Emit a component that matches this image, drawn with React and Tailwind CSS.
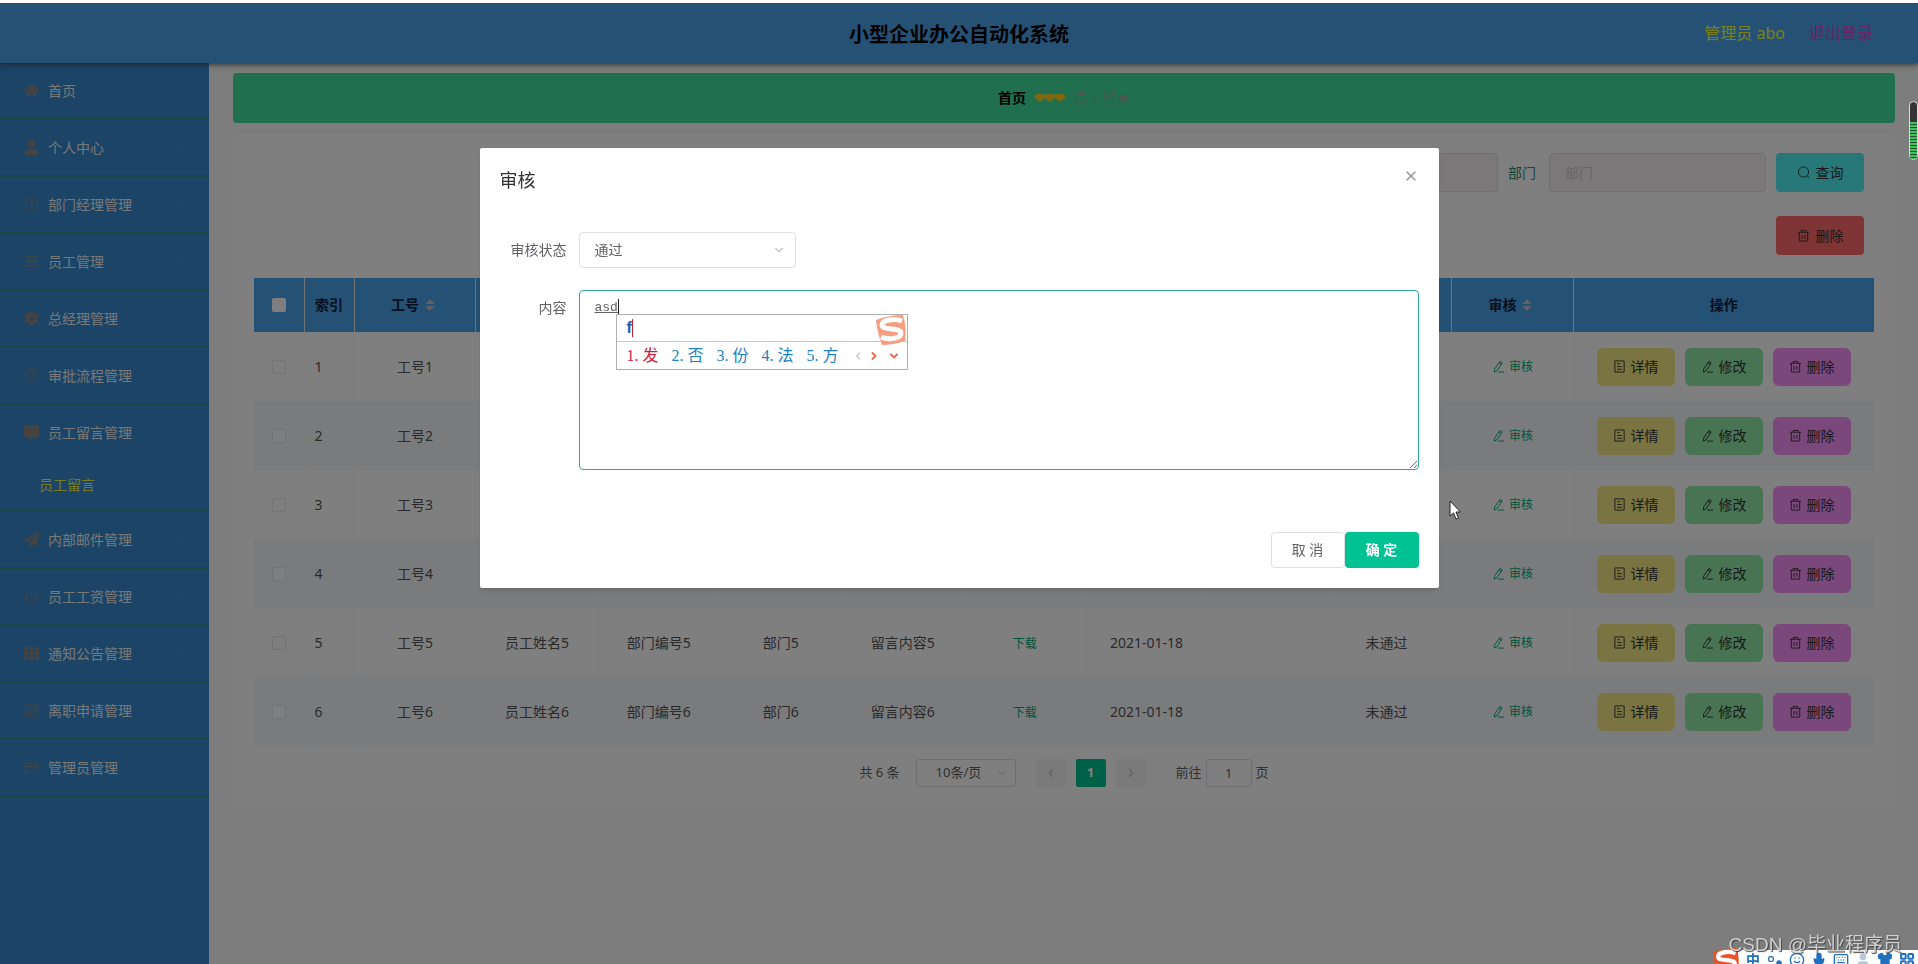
import {
  Clock, Menu, CircleHelp, Power, SquarePen, CreditCard,
  ChevronDown, ChevronLeft, ChevronRight, Circle, X, Mic, Keyboard, Smile, Shirt, LayoutGrid, User,
} from 'lucide-react';
import { FaHome, FaUser, FaCog, FaCommentAlt, FaPaperPlane, FaTh } from 'react-icons/fa';

const menus = [
  { label: '首页', icon: <FaHome size={15} /> },
  { label: '个人中心', icon: <FaUser size={15} />, arrow: true },
  { label: '部门经理管理', icon: <Clock size={15} />, arrow: true },
  { label: '员工管理', icon: <Menu size={15} strokeWidth={3} />, arrow: true },
  { label: '总经理管理', icon: <FaCog size={15} />, arrow: true },
  { label: '审批流程管理', icon: <CircleHelp size={15} />, arrow: true },
  { label: '员工留言管理', icon: <FaCommentAlt size={15} />, arrow: true, child: '员工留言' },
  { label: '内部邮件管理', icon: <FaPaperPlane size={15} />, arrow: true },
  { label: '员工工资管理', icon: <Power size={15} />, arrow: true },
  { label: '通知公告管理', icon: <FaTh size={15} />, arrow: true },
  { label: '离职申请管理', icon: <SquarePen size={15} />, arrow: true },
  { label: '管理员管理', icon: <CreditCard size={15} />, arrow: true },
];

const columns = ['工号', '员工姓名', '部门编号', '部门', '留言内容', '附件', '留言时间', '审核回复', '审核状态', '审核'];
const rows = [1, 2, 3, 4, 5, 6];

const EditIcon = () => (
  <svg width="13" height="13" viewBox="0 0 14 14" fill="none" stroke="currentColor" aria-hidden="true">
    <path d="M8.5 1.5 11 3 5.5 11.5 2.5 13 2.8 9.8ZM7.5 3.2 10 4.8M6.5 13H13" />
  </svg>
);

const TrashIcon = () => (
  <svg width="13" height="13" viewBox="0 0 14 14" fill="none" stroke="currentColor" aria-hidden="true">
    <path d="M1 3.5H13M4.5 3.5V1.5H9.5V3.5M2.5 3.5V13H11.5V3.5M5.5 6.5V10.5M8.5 6.5V10.5" />
  </svg>
);

const DocIcon = () => (
  <svg width="13" height="13" viewBox="0 0 14 14" fill="none" stroke="currentColor" aria-hidden="true">
    <path d="M2 1H12V13H2ZM4.5 4H7.5M4.5 7H9.5M4.5 10H9.5" />
  </svg>
);

const SearchIcon = () => (
  <svg width="13" height="13" viewBox="0 0 14 14" fill="none" stroke="currentColor" aria-hidden="true">
    <circle cx="7" cy="6.5" r="5.5" />
    <path d="M11 10.5 13 13" />
  </svg>
);

const SogouLogo = ({ className }) => (
  <svg viewBox="0 0 32 32" className={className} aria-hidden="true">
    <path d="M1 6Q14 1 28 1 32 14 30 27 18 31 7 31 2 18 1 6Z" fill="currentColor" />
    <path d="M27 7C19 4 7 6 7 11 7 17 26 13 26 19 26 25 13 26 6 23" fill="none" stroke="#fff" strokeWidth="5" />
  </svg>
);

const Sort = () => (
  <svg width="10" height="14" viewBox="0 0 10 14" fill="#c0c4cc" className="ml-[6px]" aria-hidden="true">
    <path d="M5 1 9.5 6H.5ZM5 13 .5 8H9.5Z" />
  </svg>
);

function Sidebar() {
  return (
    <aside className="w-[209px] shrink-0 bg-[#3688cc]">
      <nav>
        {menus.map((m) => (
          <div key={m.label} className="border-b-2 border-[#36888a]">
            <a href="#" className="flex h-[55px] items-center gap-[9px] pr-5 pl-6 text-sm text-[#f0f0f0]">
              <span className="text-[#8c8680]">{m.icon}</span>
              <span className="grow">{m.label}</span>
              {m.arrow && <ChevronDown size={12} className="text-[#4a90c8]" />}
            </a>
            {m.child && (
              <a href="#" className="flex h-[50px] items-center pl-[39px] text-sm text-[#e8f850]">{m.child}</a>
            )}
          </div>
        ))}
      </nav>
    </aside>
  );
}

function SearchBar() {
  return (
    <form className="flex flex-col items-end gap-6 pr-[10px]">
      <div className="flex items-center gap-[10px] text-sm text-[#2e8b70]">
        <label htmlFor="name" className="pr-[3px]">员工姓名</label>
        <input id="name" placeholder="员工姓名" className="h-[39px] w-[217px] rounded border border-[#e4dce0] bg-[#f7f0f2] px-[15px] placeholder:text-[#d4ccd0]" />
        <label htmlFor="dept" className="pr-[3px]">部门</label>
        <input id="dept" placeholder="部门" className="h-[39px] w-[217px] rounded border border-[#e4dce0] bg-[#f7f0f2] px-[15px] placeholder:text-[#d4ccd0]" />
        <button type="button" className="flex h-[39px] w-[88px] items-center justify-center gap-[6px] rounded-sm bg-[#52f0f2] text-[#333]">
          <SearchIcon />查询
        </button>
      </div>
      <button type="button" className="flex h-[39px] w-[88px] items-center justify-center gap-[6px] rounded-sm bg-[#ff6a6a] text-sm text-[#333]">
        <TrashIcon />删除
      </button>
    </form>
  );
}

function MessageTable() {
  return (
    <table className="w-full table-fixed border-collapse text-sm text-[#555]">
      <colgroup>
        <col className="w-[50px]" />
        <col className="w-[50px]" />
        {columns.map((c) => <col key={c} />)}
        <col className="w-[300px]" />
      </colgroup>
      <thead>
        <tr className="h-[54px] bg-[#4aa2ea] text-[#10203c]">
          <th className="border-r border-[#dfe6ec]"><input type="checkbox" aria-label="全选" className="mx-auto block size-[14px] appearance-none rounded-xs bg-white" /></th>
          <th className="border-r border-[#dfe6ec] font-bold">索引</th>
          {columns.map((c) => (
            <th key={c} className="border-r border-[#dfe6ec] pr-1 font-bold">
              <span className="flex items-center justify-center">{c}<Sort /></span>
            </th>
          ))}
          <th className="font-bold">操作</th>
        </tr>
      </thead>
      <tbody>
        {rows.map((n) => (
          <tr key={n} className="h-[69px] text-center odd:bg-white even:bg-[#f5f7fa] [&>td]:border-r [&>td]:border-[#f8f8fa]">
            <td><input type="checkbox" aria-label={`选择${n}`} className="mx-auto block size-[14px] appearance-none rounded-xs border border-[#e4e6ea] bg-white" /></td>
            <td className="pl-[10px] text-left">{n}</td>
            <td>工号{n}</td>
            <td>员工姓名{n}</td>
            <td>部门编号{n}</td>
            <td>部门{n}</td>
            <td>留言内容{n}</td>
            <td><button type="button" className="text-xs text-[#00a878]">下载</button></td>
            <td>2021-01-18</td>
            <td></td>
            <td className="pr-2">未通过</td>
            <td><button type="button" className="mx-auto flex items-center gap-1 text-xs text-[#00a878]"><EditIcon />审核</button></td>
            <td>
              <div className="flex justify-center gap-[10px] text-[#333]">
                <button type="button" className="flex h-[38px] w-[78px] items-center justify-center gap-[5px] rounded-md bg-[#f4e884]"><DocIcon />详情</button>
                <button type="button" className="flex h-[38px] w-[78px] items-center justify-center gap-[5px] rounded-md bg-[#90e8a8]"><EditIcon />修改</button>
                <button type="button" className="flex h-[38px] w-[78px] items-center justify-center gap-[5px] rounded-md bg-[#f690f6]"><TrashIcon />删除</button>
              </div>
            </td>
          </tr>
        ))}
      </tbody>
    </table>
  );
}

function Pagination() {
  return (
    <div className="flex items-center justify-center pt-[13px] text-[13px] text-[#606266]">
      <span>共 6 条</span>
      <div className="relative ml-4">
        <select aria-label="每页条数" className="h-7 w-[100px] appearance-none rounded-[3px] border border-[#dcdfe6] bg-white pl-[19px]">
          <option>10条/页</option>
        </select>
        <ChevronDown size={12} className="absolute top-2 right-2 text-[#c0c4cc]" />
      </div>
      <button type="button" aria-label="上一页" className="ml-5 flex h-7 w-[30px] items-center justify-center rounded-xs bg-[#f4f4f5] text-[#c0c4cc]"><ChevronLeft size={14} /></button>
      <button type="button" className="ml-[10px] h-7 w-[30px] rounded-xs bg-[#00c292] font-bold text-white">1</button>
      <button type="button" aria-label="下一页" className="ml-[10px] flex h-7 w-[30px] items-center justify-center rounded-xs bg-[#f4f4f5] text-[#c0c4cc]"><ChevronRight size={14} /></button>
      <label htmlFor="page" className="ml-[30px]">前往</label>
      <input id="page" defaultValue="1" className="mx-1 h-7 w-[46px] rounded-[3px] border border-[#dcdfe6] text-center" />
      <span>页</span>
    </div>
  );
}

const candidates = ['发', '否', '份', '法', '方'];

function ImePopup() {
  return (
    <div className="absolute top-6 left-[37px] w-[292px] border border-[#b0b0b0] bg-white">
      <div className="flex h-[27px] items-center border-b border-[#c8c8c8] pl-[10px] font-['Liberation_Sans'] text-base font-bold text-[#1060b8]">
        f<span className="h-[18px] w-px bg-[#d02030]" />
      </div>
      <div className="flex h-[27px] items-center gap-[13px] pl-[10px] font-['Liberation_Serif','Noto_Sans_CJK_SC',serif] text-base text-[#2080c0]">
        {candidates.map((c, i) => (
          <span key={c} className={i === 0 ? 'flex gap-1 text-[#d02040]' : 'flex gap-1'}>
            <span>{i + 1}.</span>
            <span>{c}</span>
          </span>
        ))}
        <span className="flex items-center gap-1">
          <ChevronLeft size={12} strokeWidth={3} className="text-[#ccc]" />
          <ChevronRight size={12} strokeWidth={4} className="text-[#e07050]" />
          <ChevronDown size={12} strokeWidth={4} className="ml-1 text-[#e07050]" />
        </span>
      </div>
      <SogouLogo className="absolute -top-px right-0 size-[32px] text-[#f4a080]" />
    </div>
  );
}

function AuditDialog() {
  return (
    <div className="fixed inset-0 z-20 bg-black/50">
      <div role="dialog" aria-label="审核" className="mx-auto mt-[148px] w-1/2 rounded-xs bg-white text-sm text-[#606266] shadow-md">
        <div className="flex items-start justify-between px-5 pt-5">
          <h2 className="text-lg leading-6 text-[#303133]">审核</h2>
          <button type="button" aria-label="关闭" className="text-[#909399]"><X size={16} strokeWidth={2} /></button>
        </div>
        <div className="px-5 pt-[40px]">
          <div className="flex h-9 items-center">
            <label htmlFor="state" className="w-[79px] pr-3 text-right">审核状态</label>
            <div className="relative">
              <select id="state" className="h-9 w-[217px] appearance-none rounded border border-[#dcdfe6] bg-white pl-[15px]">
                <option>通过</option>
              </select>
              <ChevronDown size={14} strokeWidth={2} className="absolute top-[11px] right-[10px] text-[#c0c4cc]" />
            </div>
          </div>
          <div className="mt-[22px] flex">
            <label htmlFor="content" className="w-[79px] pt-2 pr-3 text-right">内容</label>
            <div className="relative grow">
              <textarea id="content" defaultValue="asd" className="block h-[180px] w-full rounded border border-[#30a898] px-[15px] py-[5px] font-['Liberation_Mono','Noto_Sans_CJK_SC',monospace] text-[13px] leading-6 underline outline-none" />
              <span className="absolute top-[9px] left-[39px] h-[15px] w-px bg-[#222]" />
              <ImePopup />
            </div>
          </div>
        </div>
        <div className="flex justify-end px-5 pt-[62px] pb-5">
          <button type="button" className="h-9 w-[74px] rounded border border-[#dcdfe6] bg-white">取 消</button>
          <button type="button" className="h-9 w-[74px] rounded bg-[#00c292] font-bold text-white">确 定</button>
        </div>
      </div>
    </div>
  );
}

function DesktopOverlays() {
  return (
    <div className="pointer-events-none fixed inset-0 z-30 overflow-hidden">
      <div className="absolute inset-x-0 top-0 h-[3px] bg-white" />
      <div className="absolute top-[101px] right-0 flex h-[59px] w-[9px] flex-col rounded-full border border-[#ddd] bg-[#333] pt-5">
        <div className="grow rounded-b-full bg-[repeating-linear-gradient(#40c060_0_2px,#205030_2px_3px)]" />
      </div>
      <svg viewBox="0 0 12 20" className="absolute top-[500px] left-[1449px] h-5 w-3">
        <path d="M1 1V16L4.5 13 7 19 9.5 18 7 12H11.5Z" fill="#fff" stroke="#222" />
      </svg>
      <div className="absolute right-0 bottom-0 grid h-[14px] w-[180px] grid-cols-8 items-start justify-items-center overflow-hidden bg-white pt-[2px] pl-1 text-[#2070c0]">
        <span className="text-sm leading-4 font-bold">中</span>
        <span className="flex gap-[2px] pt-1">
          <Circle size={6} strokeWidth={5} />
          <Circle size={6} fill="currentColor" className="mt-1" />
        </span>
        <Smile size={16} />
        <Mic size={16} fill="currentColor" />
        <Keyboard size={16} />
        <User size={16} fill="currentColor" className="text-[#b8c8d8]" />
        <Shirt size={16} fill="currentColor" />
        <LayoutGrid size={16} strokeWidth={3} />
      </div>
      <SogouLogo className="absolute right-[178px] -bottom-[11px] size-[28px] text-[#f05028]" />
      <div className="absolute right-[16px] bottom-[5px] font-['Liberation_Sans','Noto_Sans_CJK_SC',sans-serif] text-[19px] leading-7 text-[#d0d0d0] [text-shadow:1px_1px_1px_#444]">CSDN @毕业程序员</div>
    </div>
  );
}

export default function App() {
  return (
    <div className="flex min-h-screen flex-col bg-[#f8faf9] font-['Noto_Sans','Noto_Sans_CJK_SC',sans-serif]">
      <header className="relative z-10 mt-[3px] grid h-[60px] grid-cols-3 items-center bg-[#4aa2ea] px-[45px] shadow-[0_1px_6px_#444]">
        <h1 className="col-start-2 pt-[3px] text-center text-xl font-bold text-black">小型企业办公自动化系统</h1>
        <div className="flex justify-end gap-6 text-base">
          <span className="text-[#f0ff40]">管理员 abo</span>
          <a href="#" className="text-[#d048c8]">退出登录</a>
        </div>
      </header>
      <div className="flex grow">
        <Sidebar />
        <main className="min-w-0 grow pt-[10px] pr-[23px] pl-6">
          <div className="flex h-[50px] items-center justify-center gap-[9px] rounded-sm bg-[#40e0a0] text-sm">
            <a href="#" className="font-bold text-black">首页</a>
            <svg width="30" height="8" viewBox="0 0 30 8" fill="#ffd020" aria-hidden="true">
              <path d="M5 8 0 4V1L2 0H8L10 1 12 0H18L20 1 22 0H28L30 1V4L25 8 20 4 15 8 10 4Z" />
            </svg>
            <span className="text-[#84b09c]">员工留言</span>
          </div>
          <div className="mt-[10px] bg-white px-[21px] pt-5 pb-5">
            <SearchBar />
            <div className="mt-[23px]"><MessageTable /></div>
            <Pagination />
          </div>
        </main>
      </div>
      <AuditDialog />
      <DesktopOverlays />
    </div>
  );
}
